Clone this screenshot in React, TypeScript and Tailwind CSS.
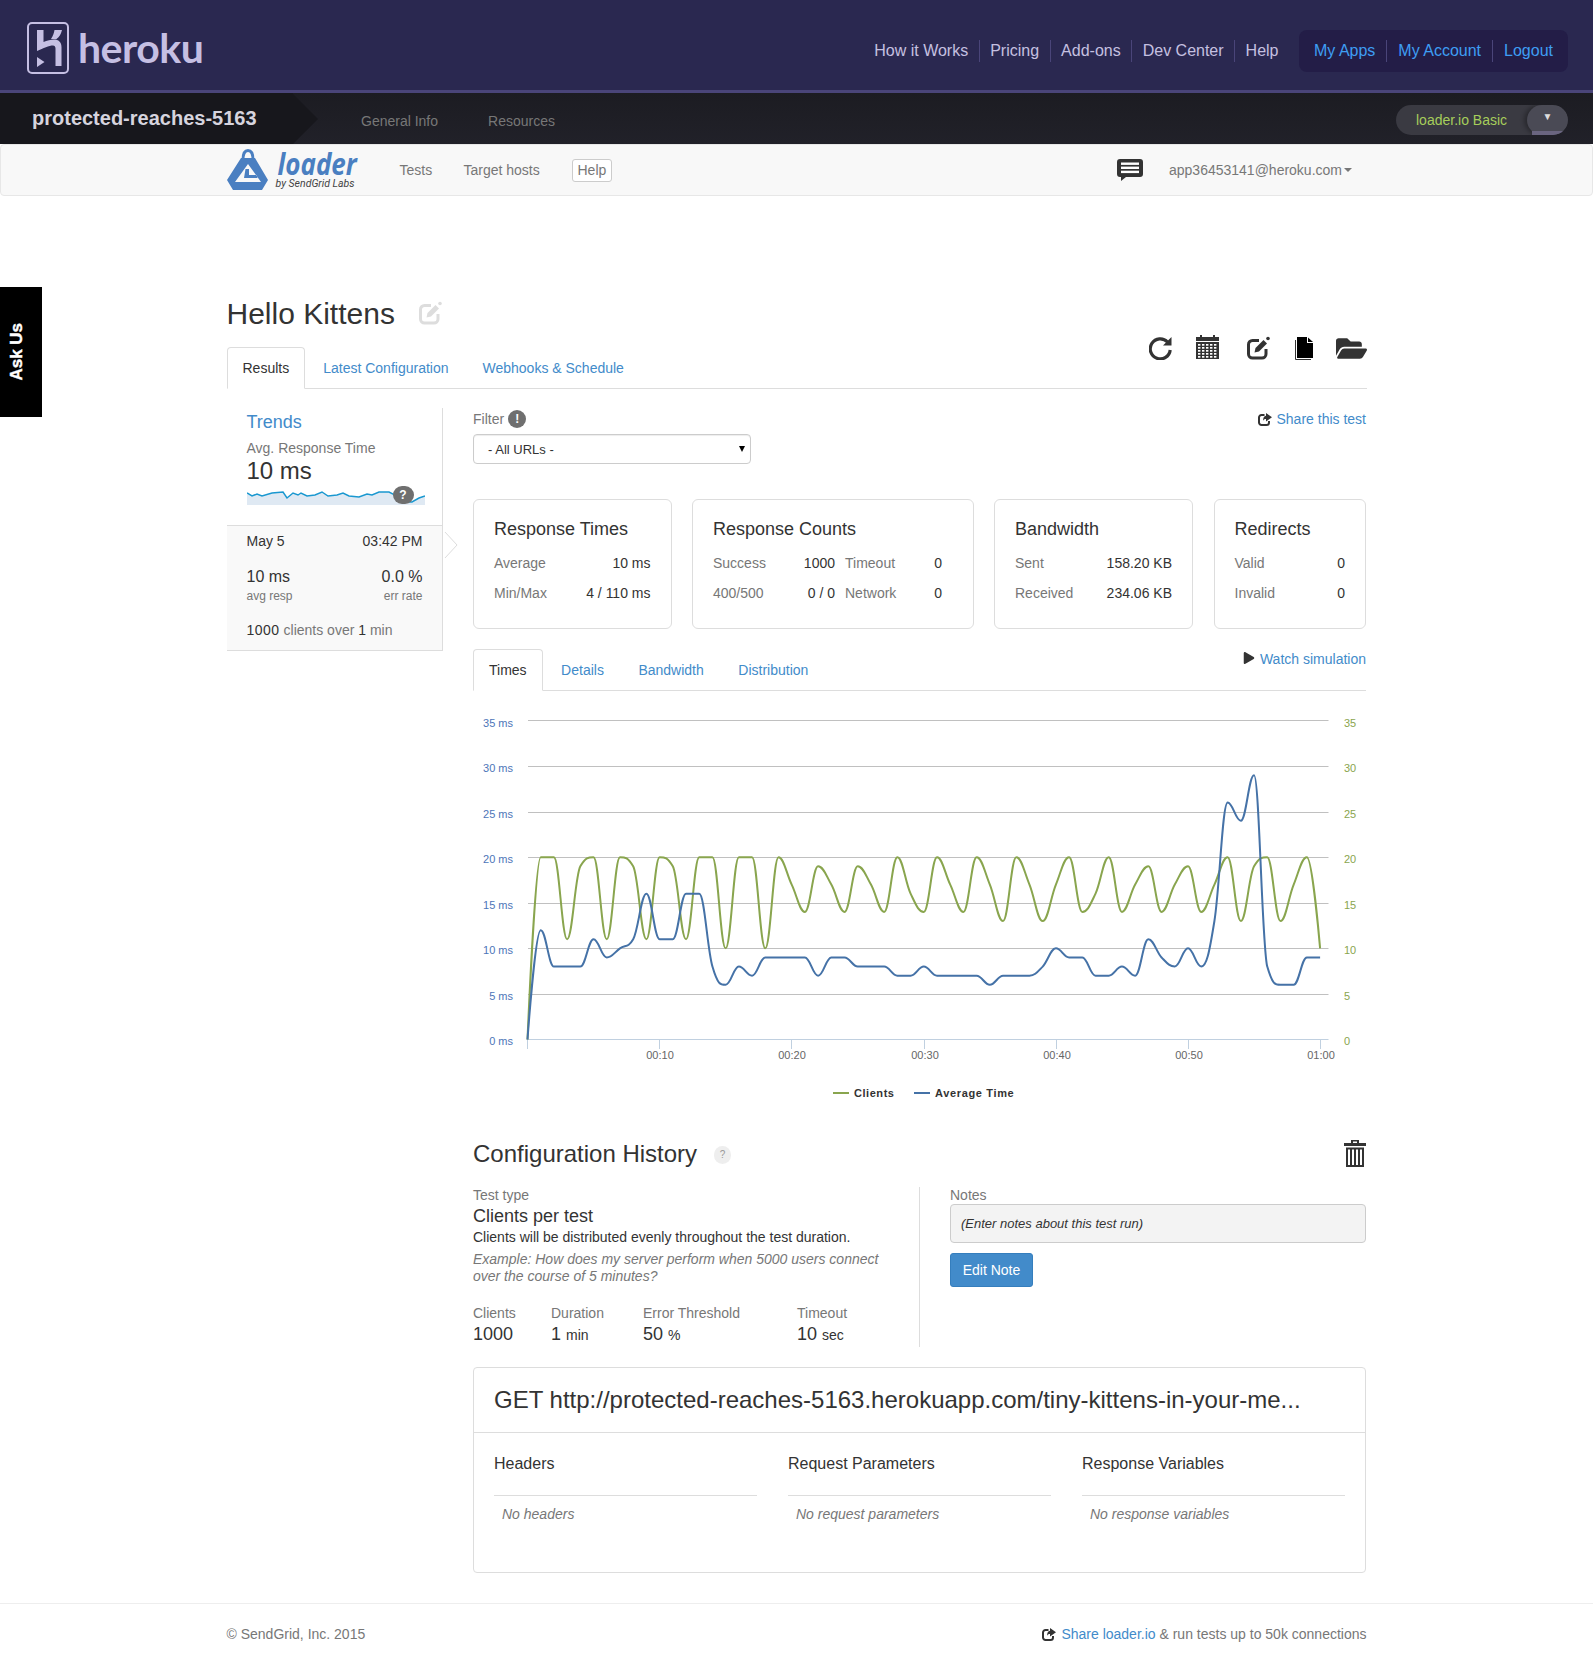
import { FaFolderOpen, FaPlay } from 'react-icons/fa';

const clients = [0, 20, 20, 11, 19, 20, 11, 20, 19, 11, 20, 19, 11, 20, 20, 10, 20, 20, 10, 20, 17, 14, 19, 17, 14, 19, 17, 14, 20, 16, 14, 20, 17, 14, 20, 17, 13, 20, 17, 13, 17, 20, 14, 16, 20, 14, 17, 19, 14, 17, 19, 14, 17, 20, 13, 19, 20, 13, 17, 20, 10];
const times = [0, 12, 8, 8, 8, 11, 9, 10, 11, 16, 11, 11, 16, 16, 8, 6, 8, 7, 9, 9, 9, 9, 7, 9, 9, 8, 8, 8, 7, 7, 8, 7, 7, 7, 7, 6, 7, 7, 7, 8, 10, 9, 9, 7, 7, 8, 7, 11, 9, 8, 10, 8, 13, 26, 24, 29, 8, 6, 6, 9, 9];

// chart geometry, in svg coordinates
const X0 = 54.5;
const XSTEP = 13.21;
const Y0 = 348.5;
const YSTEP = 9.114;

// same curve the chart library draws for a spline series
const splinePath = (data: number[]) => {
    const pts = data.map((v, i) => ({ x: X0 + i * XSTEP, y: Y0 - v * YSTEP }));
    const s = 1.5;
    const cont = (i: number) => {
        const p = pts[i];
        if (i === 0 || i === pts.length - 1) return { lx: p.x, ly: p.y, rx: p.x, ry: p.y };
        const a = pts[i - 1];
        const b = pts[i + 1];
        const lx = (s * p.x + a.x) / (s + 1);
        const rx = (s * p.x + b.x) / (s + 1);
        let ly = (s * p.y + a.y) / (s + 1);
        let ry = (s * p.y + b.y) / (s + 1);
        const c = ((ry - ly) * (rx - p.x)) / (rx - lx) + p.y - ry;
        ly += c;
        ry += c;
        if (ly > a.y && ly > p.y) {
            ly = Math.max(a.y, p.y);
            ry = 2 * p.y - ly;
        } else if (ly < a.y && ly < p.y) {
            ly = Math.min(a.y, p.y);
            ry = 2 * p.y - ly;
        }
        if (ry > b.y && ry > p.y) {
            ry = Math.max(b.y, p.y);
            ly = 2 * p.y - ry;
        } else if (ry < b.y && ry < p.y) {
            ry = Math.min(b.y, p.y);
            ly = 2 * p.y - ry;
        }
        return { lx, ly, rx, ry };
    };
    let d = `M${pts[0].x} ${pts[0].y}`;
    for (let i = 1; i < pts.length; i++) {
        const prev = cont(i - 1);
        const cur = cont(i);
        d += ` C${prev.rx} ${prev.ry} ${cur.lx} ${cur.ly} ${pts[i].x} ${pts[i].y}`;
    }
    return d;
};

const Chart = () => {
    const grid = [29.5, 75.5, 121.5, 166.5, 212.5, 257.5, 303.5];
    const labels = [35, 30, 25, 20, 15, 10, 5];
    const ticks = [
        ['00:10', 186.5],
        ['00:20', 318.5],
        ['00:30', 451.5],
        ['00:40', 583.5],
        ['00:50', 715.5],
        ['01:00', 847.5],
    ] as const;
    return (
        <svg width="893" height="420" className="block font-['Liberation_Sans',Arial,sans-serif]">
            {grid.map((y) => (
                <line key={y} x1="55" x2="855.5" y1={y} y2={y} stroke="#c0c0c0" />
            ))}
            <line x1="55" x2="855.5" y1="348.5" y2="348.5" stroke="#c0d0e0" />
            <line x1="54.5" x2="54.5" y1="348" y2="358" stroke="#c0d0e0" />
            {ticks.map(([t, x]) => (
                <g key={t}>
                    <line x1={x} x2={x} y1="348" y2="358" stroke="#c0d0e0" />
                    <text x={x + 0.5} y="368" textAnchor="middle" fontSize="11" fill="#666">{t}</text>
                </g>
            ))}
            {labels.map((v, i) => (
                <g key={v} fontSize="11">
                    <text x="40" y={grid[i] + (i === 0 ? 6 : 5)} textAnchor="end" fill="#4d75b8">{v} ms</text>
                    <text x="871" y={grid[i] + (i === 0 ? 6 : 5)} fill="#89a54e">{v}</text>
                </g>
            ))}
            <text x="40" y="354" textAnchor="end" fontSize="11" fill="#4d75b8">0 ms</text>
            <text x="871" y="354" fontSize="11" fill="#89a54e">0</text>
            <path d={splinePath(clients)} fill="none" stroke="#89a54e" strokeWidth="2" strokeLinejoin="round" />
            <path d={splinePath(times)} fill="none" stroke="#4572a7" strokeWidth="2" strokeLinejoin="round" />
            <line x1="360" x2="376" y1="402" y2="402" stroke="#89a54e" strokeWidth="2" />
            <text x="381" y="406" fontSize="11" fontWeight="700" fill="#333" letterSpacing="0.55">Clients</text>
            <line x1="441" x2="457" y1="402" y2="402" stroke="#4572a7" strokeWidth="2" />
            <text x="462" y="406" fontSize="11" fontWeight="700" fill="#333" letterSpacing="0.65">Average Time</text>
        </svg>
    );
};

const HerokuLogo = () => (
    <svg width="42" height="52" viewBox="0 0 42 52" className="block shrink-0">
        <rect x="1" y="1" width="40" height="50" rx="4" fill="none" stroke="#c5bfe3" strokeWidth="2" />
        <path
            fill="#c5bfe3"
            d="M10 8H16.5V20C20 18.5 24 17.5 27 17.5C31.5 17.5 34.5 20 34.5 25V44H28.5V26.5C28.5 24.5 27.5 23.5 26 23.5C22 23.5 16.5 26 10 29ZM27.5 8H35C34 12 32.5 15 29.5 17H24C26 14 27 11 27.5 8ZM10 35L17.5 40L10 45Z"
        />
    </svg>
);

const LoaderLogo = () => (
    <svg width="42" height="42" viewBox="0 0 42 42" className="block shrink-0">
        <path fill="none" stroke="#4a7fc1" strokeWidth="3" d="M16 11C16 4 18 1.5 21 1.5C24 1.5 26 4 26 11" />
        <path
            fill="#4a7fc1"
            fillRule="evenodd"
            d="M14 9H28L41 31L35 41H6L0 31ZM21 15L8 33H34ZM18.5 20H22V26H29.5L30.5 29H17Z"
        />
    </svg>
);

const RefreshIcon = () => (
    <svg width="23" height="25" viewBox="0 0 23 25" className="block">
        <path fill="none" stroke="#333" strokeWidth="3.2" d="M18.5 7A10 10 0 1 0 21.2 15" />
        <path fill="#333" d="M22.5 2V10.5H14Z" />
    </svg>
);

const EditIcon = ({ color, size }: { color: string; size: number }) => (
    <svg width={size} height={size} viewBox="0 0 24 24" className="block">
        <path
            fill="none"
            stroke={color}
            strokeWidth="3"
            d="M13 4.5H6.5A4 4 0 0 0 2.5 8.5V18A4 4 0 0 0 6.5 22H16A4 4 0 0 0 20 18V13"
        />
        <path fill={color} d="M8.5 16.5L9.5 12L17.5 4L21 7.5L13 15.5Z" />
        <circle cx="22" cy="2.5" r="1.8" fill={color} />
    </svg>
);

const ShareIcon = () => (
    <svg width="14" height="13" viewBox="0 0 14 13" className="block">
        <path fill="none" stroke="#333" strokeWidth="2" d="M6.5 2H3.5A2.5 2.5 0 0 0 1 4.5V9.5A2.5 2.5 0 0 0 3.5 12H8.5A2.5 2.5 0 0 0 11 9.5V8" />
        <path fill="#333" d="M8 0L14 4.2L8 8.4V6C6.5 6 5.5 6.6 5 8C5 4.8 6 3 8 2.7Z" />
    </svg>
);

const Calendar = () => (
    <svg width="23" height="24" viewBox="0 0 23 24" className="block">
        <path fill="#333" fillRule="evenodd" d="M0 2H4V0H6V2H17V0H19V2H23V24H0Z" />
        <rect x="0" y="6" width="23" height="1" fill="#fff" />
        {[9, 12, 15, 18, 21].map((y) =>
            [2, 6, 10, 14, 18].map((x) => <rect key={`${x}-${y}`} x={x} y={y} width="2.4" height="1.7" fill="#fff" />),
        )}
    </svg>
);

const FileIcon = () => (
    <svg width="18" height="23" viewBox="0 0 18 23" className="block">
        <path fill="#000" d="M2 0H12V6H18V21H2Z" />
        <path fill="#000" d="M13 0.5L18 5H13Z" />
        <path fill="none" stroke="#333" d="M0.5 3V22.5H16" />
    </svg>
);

const Trash = () => (
    <svg width="22" height="27" viewBox="0 0 22 27" className="block">
        <path fill="#333" d="M7 0H15V3H22V6H0V3H7ZM9 1.5V3H13V1.5Z" fillRule="evenodd" />
        <path fill="#333" fillRule="evenodd" d="M2 7.5H20V27H2ZM4 9.5V25H6V9.5ZM8 9.5V25H10V9.5ZM12 9.5V25H14V9.5ZM16 9.5V25H18V9.5Z" />
    </svg>
);

const ChatIcon = () => (
    <svg width="26" height="22" viewBox="0 0 26 22" className="block">
        <path fill="#333" d="M3 0H23A3 3 0 0 1 26 3V15A3 3 0 0 1 23 18H9L4 22V18H3A3 3 0 0 1 0 15V3A3 3 0 0 1 3 0Z" />
        <rect x="4" y="3.5" width="18" height="2.4" fill="#fff" />
        <rect x="4" y="7.6" width="18" height="2.4" fill="#fff" />
        <rect x="4" y="11.7" width="18" height="2.4" fill="#fff" />
    </svg>
);

const Sparkline = () => {
    const line = '0,9 5,12 10,10 15,12 25,9 36,8 40,14 46,9 51,11 54,9 60,12 68,11 75,8 81,12 90,11 96,9 102,12 112,13 120,10 125,11 132,8 142,8 148,11 155,18 165,18 172,14 178,12';
    return (
        <svg width="178" height="21" className="block">
            <polygon points={`${line} 178,21 0,21`} fill="#dfe9f3" />
            <polyline points={line} fill="none" stroke="#1a98d0" strokeWidth="1.5" />
        </svg>
    );
};

const NavItem = ({ label, last, blue }: { label: string; last?: boolean; blue?: boolean }) => (
    <a className={`h-[22px] flex items-center ${last ? '' : 'border-r'} ${blue ? 'px-[11px] text-[#3e9df4] border-[#4a4579]' : 'px-[10.5px] text-[#c5c0e0] border-[#4a4579]'}`}>
        {label}
    </a>
);

const Row = ({ label, value }: { label: string; value: string }) => (
    <div className="flex justify-between h-[30px] items-center">
        <span className="text-[#777]">{label}</span>
        <span>{value}</span>
    </div>
);

const Card = ({ title, className, children }: { title: string; className: string; children: React.ReactNode }) => (
    <div className={`h-[130px] border border-[#ddd] rounded-[6px] px-5 pt-[19px] ${className}`}>
        <h3 className="text-[18px] leading-[20px] mb-[9px]">{title}</h3>
        {children}
    </div>
);

const Stat = ({ label, value, unit, className }: { label: string; value: string; unit?: string; className: string }) => (
    <div className={className}>
        <div className="text-[#777] leading-[18px]">{label}</div>
        <div className="mt-[1px] leading-[22px] text-[18px]">
            {value} {unit && <span className="text-[14px]">{unit}</span>}
        </div>
    </div>
);

const ParamCol = ({ title, empty }: { title: string; empty: string }) => (
    <div className="w-[263px]">
        <div className="text-[16px] leading-[20px] pb-[21px] border-b border-[#ddd]">{title}</div>
        <div className="mt-[8px] pl-2 leading-[20px] italic text-[#777]">{empty}</div>
    </div>
);

export default function App() {
    return (
        <div className="relative min-h-[1663px] bg-white text-[14px] text-[#333] font-['Liberation_Sans',Arial,sans-serif]">
            {/* Heroku nav */}
            <header className="h-[93px] bg-[#2a2850] border-b-[3px] border-[#4a4579] flex items-center justify-between pl-[27px] pr-[25px]">
                <div className="flex items-center gap-[9px] mt-[6px]">
                    <HerokuLogo />
                    <span className="font-['Lato',sans-serif] font-bold text-[41px] leading-[52px] tracking-[-0.5px] text-[#c5bfe3]">heroku</span>
                </div>
                <nav className="flex items-center text-[16px] mt-[12px]">
                    <NavItem label="How it Works" />
                    <NavItem label="Pricing" />
                    <NavItem label="Add-ons" />
                    <NavItem label="Dev Center" />
                    <NavItem label="Help" last />
                    <div className="ml-[10px] h-[42px] px-[4px] rounded-[8px] bg-[#231d47] flex items-center">
                        <NavItem label="My Apps" blue />
                        <NavItem label="My Account" blue />
                        <NavItem label="Logout" blue last />
                    </div>
                </nav>
            </header>

            {/* App bar */}
            <div className="h-[51px] bg-gradient-to-b from-[#1c1c22] to-[#212129] flex items-center justify-between pr-[25px]">
                <div className="flex items-center">
                    <div className="h-[51px] w-[293px] bg-[#17171c] pl-[32px] flex items-center">
                        <span className="text-[20px] font-bold text-[#d6d4de] -mt-[1px] whitespace-nowrap">protected-reaches-5163</span>
                    </div>
                    <div className="w-0 h-0 border-y-[25.5px] border-y-transparent border-l-[25px] border-l-[#17171c]" />
                    <a className="ml-[43px] mt-[6px] text-[#777]">General Info</a>
                    <a className="ml-[50px] mt-[6px] text-[#777]">Resources</a>
                </div>
                <div className="relative mt-[3px] w-[172px] h-[30px] rounded-full bg-[#3a3a42] flex items-center pl-[20px] overflow-hidden">
                    <span className="text-[#a6ce5b]">loader.io Basic</span>
                    <div className="absolute right-0 top-0 w-[41px] h-[30px] rounded-full bg-[#4a4a55] text-center text-[10px] leading-[24px] text-[#ddd] shadow-[-3px_0_4px_rgba(0,0,0,0.3)]">
                        ▼
                        <div className="absolute left-[5px] right-[4px] bottom-0 h-[4px] bg-[#6a6580]" />
                    </div>
                </div>
            </div>

            {/* Loader nav */}
            <div className="h-[52px] bg-[#f8f8f8] border border-[#e7e7e7] rounded-[4px]">
                <div className="relative w-[1140px] mx-auto h-full flex items-center">
                    <div className="flex items-start mt-[-1px]">
                        <LoaderLogo />
                        <div className="ml-[8px] w-[84px] h-[42px] flex flex-col">
                            <span className="block h-[24px] mb-[5px] ml-[1px] font-['Open_Sans',sans-serif] font-bold italic text-[26px] leading-[24px] text-[#4a7fc1] scale-y-[1.2] origin-top">loader</span>
                            <span className="-ml-[1px] font-['Roboto',sans-serif] italic text-[10.5px] leading-[12px] text-[#444] whitespace-nowrap">by SendGrid Labs</span>
                        </div>
                    </div>
                    <a className="ml-[39px] text-[#777] w-[64px]">Tests</a>
                    <a className="text-[#777] w-[108px]">Target hosts</a>
                    <a className="text-[#777] border border-[#ccc] rounded-[3px] h-[23px] px-[5px] leading-[21px] bg-white">Help</a>
                    <div className="ml-auto flex items-center mr-[14.5px]">
                        <ChatIcon />
                        <span className="ml-[26px] text-[#777]">app36453141@heroku.com</span>
                        <span className="ml-[2px] w-0 h-0 border-x-[4px] border-x-transparent border-t-[4px] border-t-[#777]" />
                    </div>
                </div>
            </div>

            {/* Ask us tab */}
            <div className="absolute left-0 top-[287px] w-[42px] h-[130px] bg-black flex items-center justify-center pr-[8px]">
                <span className="-rotate-90 whitespace-nowrap font-bold text-white text-[17px] [-webkit-text-stroke:0.4px_white]">Ask Us</span>
            </div>

            <main className="w-[1140px] mx-auto">
                <div className="pt-[101px] flex items-center h-[133px]">
                    <h1 className="text-[30px] leading-[33px] whitespace-nowrap">Hello Kittens</h1>
                    <div className="ml-[23px]"><EditIcon color="#ddd" size={24} /></div>
                </div>

                <div className="mt-[6px] h-[54px] border-b border-[#ddd] flex justify-between">
                    <div className="flex items-end gap-[2px] mb-[-1px]">
                        <span className="h-[42px] px-[15px] pt-[10px] border border-[#ddd] border-b-white rounded-t-[4px] leading-[20px] bg-white">Results</span>
                        <a className="h-[42px] px-[16px] pt-[11px] leading-[20px] text-[#428bca]">Latest Configuration</a>
                        <a className="h-[42px] px-[16px] pt-[11px] leading-[20px] text-[#428bca]">Webhooks &amp; Schedule</a>
                    </div>
                    <div className="flex items-start text-[#333]">
                        <RefreshIcon />
                        <div className="ml-[24px]"><Calendar /></div>
                        <div className="ml-[27px] mt-[1px]"><EditIcon color="#333" size={24} /></div>
                        <div className="ml-[25px] mt-[2px]"><FileIcon /></div>
                        <FaFolderOpen size={31} className="ml-[22.5px] -mt-[2px]" />
                    </div>
                </div>

                <div className="mt-[19px] flex items-start">
                    {/* Trends sidebar */}
                    <aside className="relative w-[216px] border-r border-[#ddd] shrink-0">
                        <div className="h-[117px] px-5 pt-[4px]">
                            <a className="block text-[18px] leading-[20px] text-[#428bca]">Trends</a>
                            <div className="mt-[6px] leading-[20px] text-[#777]">Avg. Response Time</div>
                            <div className="text-[24px] leading-[26px]">10 ms</div>
                            <div className="relative">
                                <Sparkline />
                                <span className="absolute left-[146px] top-[2px] w-[21px] h-[18px] rounded-full bg-[#6f6f6f] text-white text-[12px] font-bold leading-[18px] text-center">?</span>
                            </div>
                        </div>
                        <div className="h-[126px] bg-[#f9f9f9] border-y border-[#ddd] pl-5 pr-[19px] pt-[5px]">
                            <div className="flex justify-between leading-[20px]"><span>May 5</span><span>03:42 PM</span></div>
                            <div className="mt-[16px] flex justify-between text-[16px] leading-[20px]"><span>10 ms</span><span>0.0 %</span></div>
                            <div className="mt-[1px] flex justify-between text-[12px] leading-[16px] text-[#777]"><span>avg resp</span><span>err rate</span></div>
                            <div className="mt-[16px] leading-[20px] text-[#777]"><span className="text-[#333] tracking-[0.5px]">1000</span> clients over <span className="text-[#333]">1</span> min</div>
                        </div>
                        <svg width="15" height="28" className="absolute left-[217px] top-[123px]">
                            <path d="M1 1L13 14L1 27" fill="#fff" stroke="#ddd" />
                        </svg>
                    </aside>

                    <section className="ml-[30.5px] w-[893px] shrink-0">
                        <div className="flex justify-between h-[22px] items-center">
                            <div className="flex items-center text-[#777]">
                                Filter
                                <span className="ml-[4px] w-[18px] h-[18px] rounded-full bg-[#6f6f6f] text-white text-[12px] font-bold text-center leading-[18px]">!</span>
                            </div>
                            <a className="flex items-center text-[#428bca]">
                                <span className="mr-[5px]"><ShareIcon /></span>
                                Share this test
                            </a>
                        </div>
                        <div className="mt-[4px] relative w-[278px] h-[30px] border border-[#ccc] rounded-[4px] bg-white shadow-[inset_0_1px_1px_rgba(0,0,0,0.075)] flex items-center pl-[14px] pt-[1px] text-[13px]">
                            - All URLs -
                            <span className="absolute right-[5px] top-[11px] w-0 h-0 border-x-[3.5px] border-x-transparent border-t-[6px] border-t-black" />
                        </div>

                        <div className="mt-[35px] flex gap-[20.5px]">
                            <Card title="Response Times" className="w-[198.5px]">
                                <Row label="Average" value="10 ms" />
                                <Row label="Min/Max" value="4 / 110 ms" />
                            </Card>
                            <Card title="Response Counts" className="w-[281.5px]">
                                <div className="flex">
                                    <div className="w-[122px] shrink-0">
                                        <Row label="Success" value="1000" />
                                        <Row label="400/500" value="0 / 0" />
                                    </div>
                                    <div className="ml-[10px] w-[97px] shrink-0">
                                        <Row label="Timeout" value="0" />
                                        <Row label="Network" value="0" />
                                    </div>
                                </div>
                            </Card>
                            <Card title="Bandwidth" className="w-[199px]">
                                <Row label="Sent" value="158.20 KB" />
                                <Row label="Received" value="234.06 KB" />
                            </Card>
                            <Card title="Redirects" className="flex-1">
                                <Row label="Valid" value="0" />
                                <Row label="Invalid" value="0" />
                            </Card>
                        </div>

                        <div className="mt-[20px] h-[42px] border-b border-[#ddd] flex justify-between">
                            <div className="flex items-end gap-[2.5px] mb-[-1px]">
                                <span className="h-[42px] px-[15px] pt-[10px] border border-[#ddd] border-b-white rounded-t-[4px] leading-[20px] bg-white">Times</span>
                                <a className="h-[42px] px-[16px] pt-[11px] leading-[20px] text-[#428bca]">Details</a>
                                <a className="h-[42px] px-[16px] pt-[11px] leading-[20px] text-[#428bca]">Bandwidth</a>
                                <a className="h-[42px] px-[16px] pt-[11px] leading-[20px] text-[#428bca]">Distribution</a>
                            </div>
                            <a className="flex items-start leading-[20px] text-[#428bca]">
                                <FaPlay size={12} className="text-[#333] mr-[5px] mt-[3px]" />
                                Watch simulation
                            </a>
                        </div>

                        <Chart />

                        {/* Configuration history */}
                        <div className="mt-[30px] flex justify-between items-start h-[26px]">
                            <div className="flex items-center">
                                <h2 className="text-[24px] leading-[26px]">Configuration History</h2>
                                <span className="ml-[17px] mt-[2px] w-[17px] h-[18px] rounded-full bg-[#eee] text-[#999] text-[10px] text-center leading-[18px]">?</span>
                            </div>
                            <div className="-mt-[1px]"><Trash /></div>
                        </div>

                        <div className="mt-[20px] flex items-start">
                            <div className="w-[447px] h-[160px] border-r border-[#ddd] shrink-0">
                                <div className="leading-[16px] text-[#777]">Test type</div>
                                <div className="mt-[2px] text-[18px] leading-[22px]">Clients per test</div>
                                <div className="mt-[1px] leading-[18px]">Clients will be distributed evenly throughout the test duration.</div>
                                <div className="mt-[5px] leading-[17px] italic text-[#777] w-[410px]">Example: How does my server perform when 5000 users connect over the course of 5 minutes?</div>
                                <div className="mt-[19px] flex">
                                    <Stat label="Clients" value="1000" className="w-[78px]" />
                                    <Stat label="Duration" value="1" unit="min" className="w-[92px]" />
                                    <Stat label="Error Threshold" value="50" unit="%" className="w-[154px]" />
                                    <Stat label="Timeout" value="10" unit="sec" className="w-[100px]" />
                                </div>
                            </div>
                            <div className="ml-[30px] flex-1">
                                <div className="leading-[16px] text-[#777]">Notes</div>
                                <div className="mt-[1px] h-[39px] border border-[#ccc] rounded-[4px] bg-[#f3f3f3] flex items-center px-[10px] text-[13px] italic">(Enter notes about this test run)</div>
                                <button className="mt-[10px] w-[83px] h-[34px] rounded-[3px] bg-[#428bca] border border-[#357ebd] text-white">Edit Note</button>
                            </div>
                        </div>

                        <div className="mt-[20px] h-[206px] border border-[#ddd] rounded-[4px]">
                            <div className="h-[65px] border-b border-[#ddd] flex items-center px-5 text-[24px] whitespace-nowrap">
                                GET http://protected-reaches-5163.herokuapp.com/tiny-kittens-in-your-me...
                            </div>
                            <div className="px-5 pt-[21px] flex gap-[31px]">
                                <ParamCol title="Headers" empty="No headers" />
                                <ParamCol title="Request Parameters" empty="No request parameters" />
                                <ParamCol title="Response Variables" empty="No response variables" />
                            </div>
                        </div>
                    </section>
                </div>
            </main>

            <footer className="mt-[30px] h-[60px] border-t border-[#eee]">
                <div className="w-[1140px] mx-auto pt-[20px] flex justify-between leading-[20px] text-[#777]">
                    <span>© SendGrid, Inc. 2015</span>
                    <span className="flex items-center">
                        <span className="mr-[5px]"><ShareIcon /></span>
                        <a className="text-[#428bca]">Share loader.io</a>
                        <span className="whitespace-pre"> &amp; run tests up to 50k connections</span>
                    </span>
                </div>
            </footer>
        </div>
    );
}
